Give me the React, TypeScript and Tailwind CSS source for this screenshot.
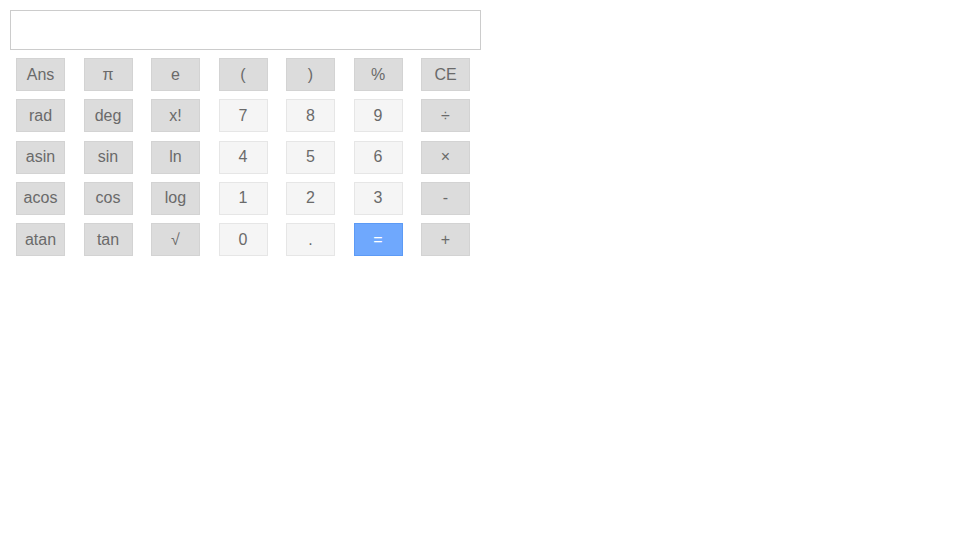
import { type FC } from "react";

type Key = { label: string; kind: "fn" | "num" | "eq" };

const rows: Key[][] = [
  [
    { label: "Ans", kind: "fn" },
    { label: "π", kind: "fn" },
    { label: "e", kind: "fn" },
    { label: "(", kind: "fn" },
    { label: ")", kind: "fn" },
    { label: "%", kind: "fn" },
    { label: "CE", kind: "fn" },
  ],
  [
    { label: "rad", kind: "fn" },
    { label: "deg", kind: "fn" },
    { label: "x!", kind: "fn" },
    { label: "7", kind: "num" },
    { label: "8", kind: "num" },
    { label: "9", kind: "num" },
    { label: "÷", kind: "fn" },
  ],
  [
    { label: "asin", kind: "fn" },
    { label: "sin", kind: "fn" },
    { label: "ln", kind: "fn" },
    { label: "4", kind: "num" },
    { label: "5", kind: "num" },
    { label: "6", kind: "num" },
    { label: "×", kind: "fn" },
  ],
  [
    { label: "acos", kind: "fn" },
    { label: "cos", kind: "fn" },
    { label: "log", kind: "fn" },
    { label: "1", kind: "num" },
    { label: "2", kind: "num" },
    { label: "3", kind: "num" },
    { label: "-", kind: "fn" },
  ],
  [
    { label: "atan", kind: "fn" },
    { label: "tan", kind: "fn" },
    { label: "√", kind: "fn" },
    { label: "0", kind: "num" },
    { label: ".", kind: "num" },
    { label: "=", kind: "eq" },
    { label: "+", kind: "fn" },
  ],
];

const styles: Record<Key["kind"], string> = {
  fn: "bg-[#dcdcdc] border-[#d3d3d3] text-[#6a6a6a]",
  num: "bg-[#f5f5f5] border-[#e6e6e6] text-[#6a6a6a]",
  eq: "bg-[#6fa8fd] border-[#5c9af5] text-white",
};

const CalcKey: FC<{ k: Key }> = ({ k }) => (
  <button
    className={`h-[33px] w-[49px] border flex items-center justify-center text-[16px] leading-none ${styles[k.kind]}`}
  >
    {k.label}
  </button>
);

export default function App() {
  return (
    <div className="w-[960px] h-[540px] bg-white font-['Liberation_Sans',Arial,sans-serif]">
      <div className="pt-[10px] pl-[10px]">
        <div className="w-[471px] h-[40px] border border-[#cccccc] bg-white" />
        <div className="mt-[8px] ml-[6px] grid grid-cols-[repeat(7,49px)] gap-x-[18.5px] gap-y-[8.3px]">
          {rows.flat().map((k, i) => (
            <CalcKey key={i} k={k} />
          ))}
        </div>
      </div>
    </div>
  );
}
